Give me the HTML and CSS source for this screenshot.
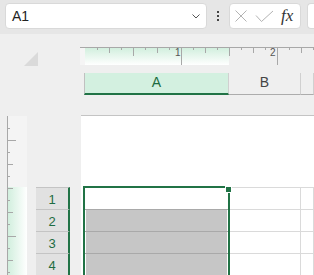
FILE: index.html
```html
<!DOCTYPE html>
<html lang="en">
<head>
    <meta charset="UTF-8">
    <meta name="viewport" content="width=device-width, initial-scale=1.0">
    <title>Book1 - Page Layout</title>
    <link rel="stylesheet" href="styles.css">
</head>
<body>
    <!-- 名称框 + 编辑栏 -->
    <div class="formula-bar">
        <div class="name-box">
            <span class="name-text">A1</span>
            <svg class="chevron" viewBox="0 0 8 5"><path d="M0.5 0.5 L4 4 L7.5 0.5"/></svg>
        </div>
        <div class="grip"><span></span><span></span><span></span></div>
        <div class="fx-box">
            <svg class="cancel-icon" viewBox="0 0 12 12"><path d="M0.5 0.5 L11.5 11.5 M11.5 0.5 L0.5 11.5"/></svg>
            <svg class="check-icon" viewBox="0 0 19 13"><path d="M1 5.5 L6.5 11.5 L18 1"/></svg>
            <span class="fx">fx</span>
        </div>
        <div class="formula-input"></div>
    </div>

    <!-- 页面布局视图 -->
    <div class="sheet">
        <div class="corner"><div class="corner-mark"></div></div>

        <div class="top-rail">
            <!-- 水平标尺 -->
            <div class="h-ruler">
                <div class="ruler-margin"></div>
                <div class="ruler-active"></div>
                <div class="h-ticks"></div>
                <span class="ruler-num num-1">1</span>
                <span class="ruler-num num-2">2</span>
            </div>
            <!-- 列标题 -->
            <div class="col-heads">
                <div class="col-head is-active">A</div>
                <div class="col-head col-b">B</div>
                <div class="col-head col-c"></div>
            </div>
        </div>

        <div class="side-rail">
            <!-- 垂直标尺 -->
            <div class="v-ruler">
                <div class="v-margin"></div>
                <div class="v-active"></div>
                <div class="v-ticks"></div>
            </div>
            <!-- 行标题 -->
            <div class="row-heads">
                <div class="row-head">1</div>
                <div class="row-head">2</div>
                <div class="row-head">3</div>
                <div class="row-head">4</div>
            </div>
        </div>

        <div class="page-area">
            <div class="page">
                <div class="cells">
                    <div class="cell-row">
                        <div class="cell cell-a"></div>
                        <div class="cell cell-b"></div>
                        <div class="cell cell-c"></div>
                    </div>
                    <div class="cell-row">
                        <div class="cell cell-a is-shaded"></div>
                        <div class="cell cell-b"></div>
                        <div class="cell cell-c"></div>
                    </div>
                    <div class="cell-row">
                        <div class="cell cell-a is-shaded"></div>
                        <div class="cell cell-b"></div>
                        <div class="cell cell-c"></div>
                    </div>
                    <div class="cell-row">
                        <div class="cell cell-a is-shaded"></div>
                        <div class="cell cell-b"></div>
                        <div class="cell cell-c"></div>
                    </div>
                    <!-- 选区边框 -->
                    <div class="selection"></div>
                    <div class="fill-handle"></div>
                </div>
            </div>
        </div>
    </div>
</body>
</html>
```

FILE: styles.css
```css
/* 全局样式 */
* {
    box-sizing: border-box;
}
body {
    margin: 0;
    width: 314px;
    height: 275px;
    overflow: hidden;
    background: #efefef;
    font-family: 'Segoe UI', 'Liberation Sans', Arial, sans-serif;
    color: #333;
}

/* 编辑栏 */
.formula-bar {
    display: flex;
    height: 34px;
    padding: 3px 0 0 5px;
    background: #e6e6e6;
}
.name-box {
    display: flex;
    align-items: center;
    width: 202px;
    height: 26px;
    padding: 0 6px;
    background: #fff;
    border: 1px solid #d9d9d9;
    border-radius: 4px;
}
.name-text {
    flex: 1;
    font-size: 14px;
    color: #222;
}
.chevron {
    width: 8px;
    height: 5px;
    fill: none;
    stroke: #555;
    stroke-width: 1;
}
.grip {
    display: flex;
    flex-direction: column;
    align-items: center;
    gap: 2px;
    width: 22px;
    padding-top: 8px;
}
.grip span {
    width: 2px;
    height: 2px;
    background: #444;
}
.fx-box {
    display: flex;
    align-items: center;
    width: 72px;
    height: 26px;
    padding-left: 5px;
    background: #fff;
    border: 1px solid #d9d9d9;
    border-radius: 4px;
}
.cancel-icon,
.check-icon {
    fill: none;
    stroke: #b3b3b3;
    stroke-width: 1;
}
.cancel-icon {
    width: 12px;
    height: 12px;
    margin-right: 8px;
}
.check-icon {
    width: 19px;
    height: 13px;
    margin-right: 7px;
}
.fx {
    font-family: 'Liberation Serif', 'Times New Roman', serif;
    font-style: italic;
    font-size: 17px;
    color: #333;
}
.formula-input {
    flex: 1;
    height: 26px;
    margin-left: 6px;
    background: #fff;
    border: 1px solid #d9d9d9;
    border-right: none;
    border-radius: 4px 0 0 4px;
}

/* 工作表区域 */
.sheet {
    display: grid;
    grid-template-columns: 80px 1fr;
    grid-template-rows: 81px 1fr;
    height: 241px;
}
.corner {
    padding: 18px 0 0 24px;
}
.corner-mark {
    width: 14px;
    height: 14px;
    background: #dadada;
    clip-path: polygon(100% 0, 100% 100%, 0 100%);
}

/* 水平标尺 */
.top-rail {
    overflow: hidden;
    padding-top: 13px;
}
.h-ruler {
    position: relative;
    display: flex;
    height: 18px;
    border-top: 1px solid #a8a8a8;
}
.ruler-margin {
    width: 5px;
    background: #f5f5f5;
}
.ruler-active {
    width: 144px;
    background: linear-gradient(#d2efde, #fff);
}
.h-ticks {
    position: absolute;
    top: 0;
    left: 6px;
    right: 0;
    bottom: 0;
    background:
        repeating-linear-gradient(to right, transparent 0 95px, #a8a8a8 95px 96px) 0 0 / 100% 17px no-repeat,
        repeating-linear-gradient(to right, transparent 0 47px, #a8a8a8 47px 48px, transparent 48px 96px) 0 0 / 100% 8px no-repeat,
        repeating-linear-gradient(to right, transparent 0 23px, #a8a8a8 23px 24px) 0 0 / 100% 5px no-repeat,
        repeating-linear-gradient(to right, transparent 0 11px, #a8a8a8 11px 12px) 0 0 / 100% 2px no-repeat;
}
.ruler-num {
    position: absolute;
    top: 0;
    font-size: 10px;
    line-height: 10px;
    color: #555;
}
.num-1 {
    left: 95px;
}
.num-2 {
    left: 190px;
}

/* 列标题 */
.col-heads {
    display: flex;
    height: 22px;
    margin: 8px 0 0 4px;
    font-size: 14px;
}
.col-head {
    display: flex;
    align-items: center;
    justify-content: center;
    padding-bottom: 3px;
    border-right: 1px solid #d0d0d0;
    border-bottom: 1px solid #acacac;
    color: #444;
}
.col-head.is-active {
    width: 145px;
    border-left: 1px solid #c0c0c0;
    border-bottom: 2px solid #217346;
    background: #d3f0e0;
    color: #1d6b41;
}
.col-b {
    width: 72px;
}
.col-c {
    flex: 1;
}

/* 垂直标尺 + 行标题 */
.side-rail {
    display: flex;
    overflow: hidden;
}
.v-ruler {
    position: relative;
    display: flex;
    flex-direction: column;
    width: 20px;
    margin: 1px 0 0 7px;
    border-left: 1px solid #a8a8a8;
}
.v-margin {
    height: 71px;
    background: #f4f4f4;
}
.v-active {
    flex: 1;
    background: linear-gradient(to right, #d2efde, #fff);
}
.v-ticks {
    position: absolute;
    top: 1px;
    left: 0;
    right: 0;
    bottom: 0;
    background:
        repeating-linear-gradient(to bottom, transparent 0 23px, #a8a8a8 23px 24px, transparent 24px 96px) 0 0 / 8px 100% no-repeat,
        repeating-linear-gradient(to bottom, transparent 0 23px, #a8a8a8 23px 24px) 0 0 / 5px 100% no-repeat,
        repeating-linear-gradient(to bottom, transparent 0 11px, #a8a8a8 11px 12px) 0 0 / 2px 100% no-repeat;
}
.row-heads {
    width: 34px;
    margin: 72px 0 0 9px;
}
.row-head {
    display: flex;
    align-items: center;
    justify-content: center;
    height: 22px;
    padding-top: 2px;
    border-top: 1px solid #c4c4c4;
    border-right: 2px solid #217346;
    background: #e1e1e1;
    color: #1e6c42;
    font-size: 13px;
}

/* 页面与单元格 */
.page-area {
    overflow: hidden;
}
.page {
    height: 100%;
    margin-left: 1px;
    padding: 71px 0 0 4px;
    background: #fff;
    border-top: 1px solid #c4c4c4;
}
.cells {
    position: relative;
}
.cell-row {
    display: flex;
    height: 22px;
}
.cell {
    border-top: 1px solid #dadada;
    border-right: 1px solid #dadada;
}
.cell-a {
    width: 144px;
}
.cell-b {
    width: 72px;
}
.cell-c {
    flex: 1;
}
.cell.is-shaded {
    background: #c6c6c6;
    border-top-color: #a9a9a9;
    box-shadow: inset 1px 0 #fff, inset -1px 0 #fff;
}
.selection {
    position: absolute;
    left: -2px;
    top: -1px;
    width: 147px;
    height: 100px;
    border: 2px solid #217346;
}
.fill-handle {
    position: absolute;
    left: 140px;
    top: -1px;
    width: 7px;
    height: 7px;
    background: #217346;
    border: 1px solid #fff;
}
```
